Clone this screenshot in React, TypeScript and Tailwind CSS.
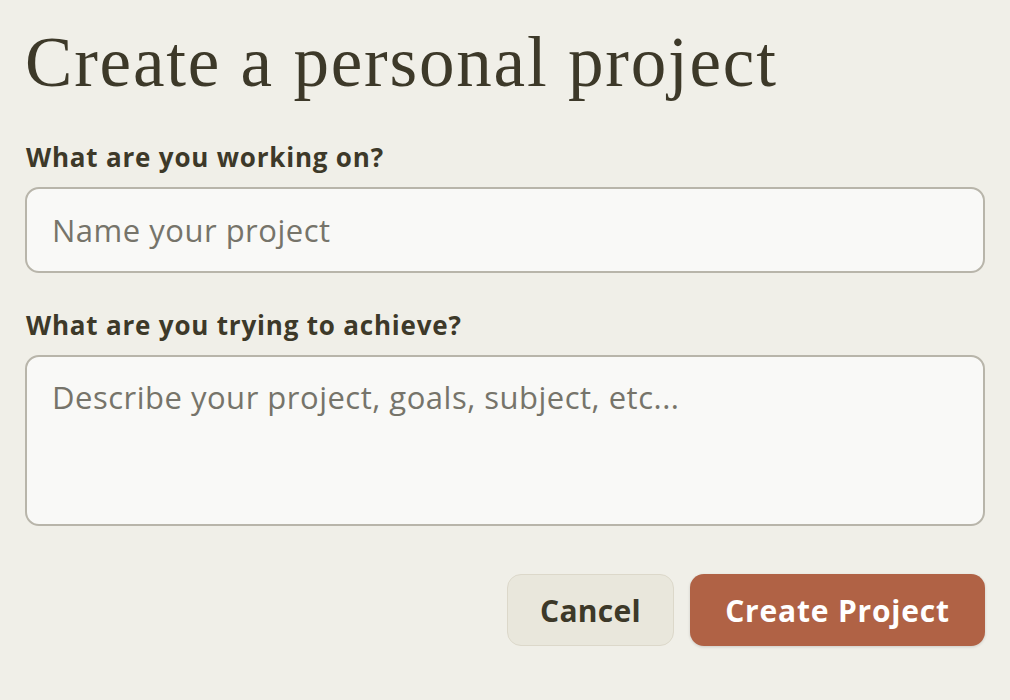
import { useState } from 'react';

export default function App() {
  const [name, setName] = useState('');
  const [goal, setGoal] = useState('');

  return (
    <div className="min-h-screen w-full bg-[#f0efe8] text-[#3d3929]" style={{ fontFamily: '"Open Sans", "Noto Sans", sans-serif' }}>
      <div className="px-[25px] pt-[24px]">
        <h1 className="text-[71px] leading-[76px] tracking-[1.8px] text-[#3d3929]" style={{ fontFamily: '"Liberation Serif", serif' }}>
          Create a personal project
        </h1>

        <form className="mt-[42px] flex flex-col" onSubmit={(e) => e.preventDefault()}>
          <label className="mb-[15px] ml-[1px] text-[26px] font-bold leading-[30px] tracking-[0.8px]">
            What are you working on?
          </label>
          <input
            type="text"
            value={name}
            onChange={(e) => setName(e.target.value)}
            placeholder="Name your project"
            className="h-[86px] w-full rounded-[14px] border-2 border-[#b8b5aa] bg-[#f9f9f7] px-[25px] text-[31px] tracking-[0.5px] text-[#3d3929] placeholder:text-[#76746a] outline-none"
          />

          <label className="mt-[37px] mb-[15px] ml-[1px] text-[26px] font-bold leading-[30px] tracking-[0.8px]">
            What are you trying to achieve?
          </label>
          <textarea
            value={goal}
            onChange={(e) => setGoal(e.target.value)}
            placeholder="Describe your project, goals, subject, etc..."
            className="h-[171px] w-full resize-none rounded-[14px] border-2 border-[#b8b5aa] bg-[#f9f9f7] px-[25px] pt-[20px] text-[31px] leading-[40px] tracking-[0.5px] text-[#3d3929] placeholder:text-[#76746a] outline-none"
          />

          <div className="mt-[48px] flex justify-end gap-[16px]">
            <button
              type="button"
              className="h-[72px] w-[167px] rounded-[14px] border border-[#dcd8ca] bg-[#e9e7dc] text-[30px] font-bold tracking-[0.3px] text-[#3d3929]"
            >
              Cancel
            </button>
            <button
              type="submit"
              className="h-[72px] w-[295px] rounded-[14px] bg-[#b06245] text-[30px] font-bold tracking-[0.8px] text-white shadow-[0_1px_3px_rgba(0,0,0,0.15)]"
            >
              Create Project
            </button>
          </div>
        </form>
      </div>
    </div>
  );
}
